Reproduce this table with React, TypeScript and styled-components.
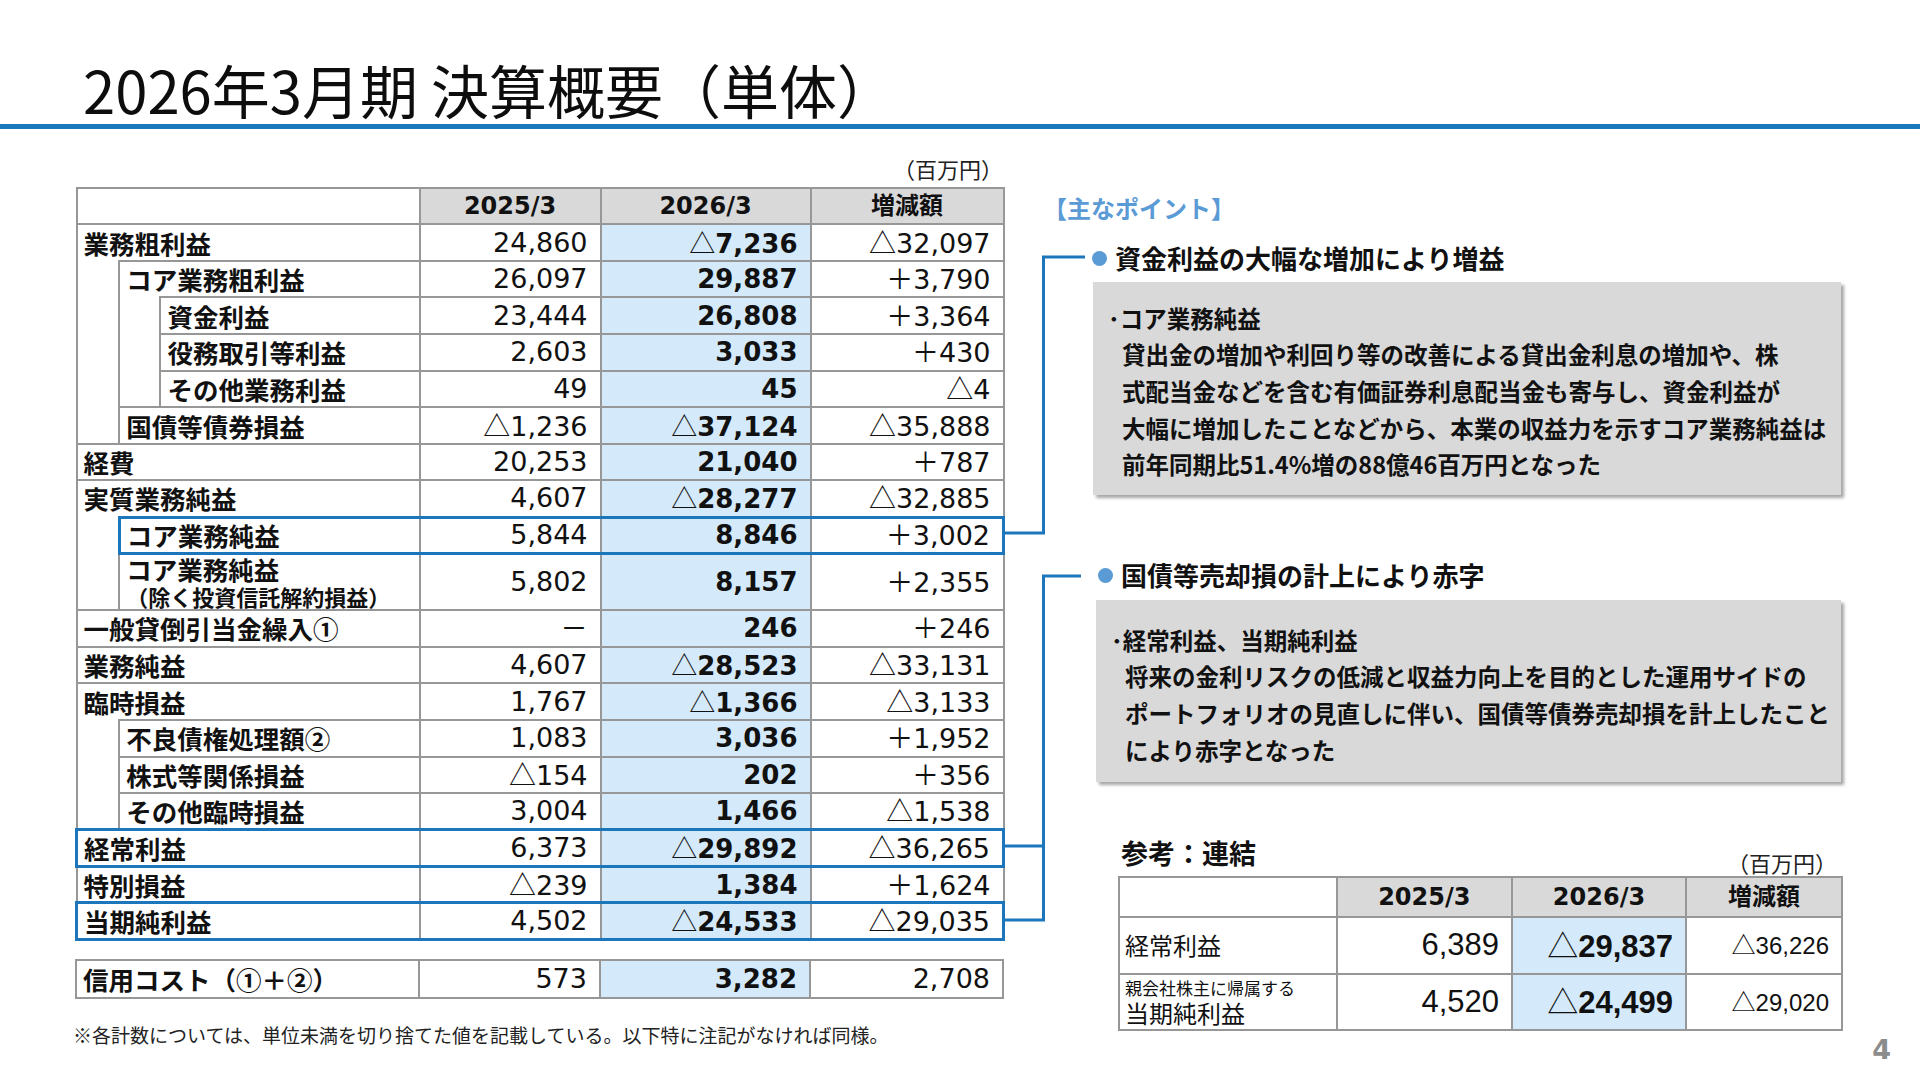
import React from "react";
import styled, { createGlobalStyle, css } from "styled-components";

const GlobalStyle = createGlobalStyle`
  html, body { margin: 0; padding: 0; background: #fff; }
  body { font-family: "Noto Sans CJK JP", "Noto Sans", sans-serif; color: #111; }
`;

const BLUE = "#1c76bc";
const GRID = "#979797";
const NUM_FONT = `"DejaVu Sans", "Noto Sans CJK JP", sans-serif`;

const Slide = styled.div`
  position: relative;
  width: 1920px;
  height: 1080px;
  overflow: hidden;
  background: #fff;
  display: flex;
  flex-direction: column;
`;

const Header = styled.header`
  flex: none;
  height: 124px;
  box-sizing: border-box;
  display: flex;
  align-items: flex-end;
  padding-left: 83px;
`;

const Title = styled.h1`
  margin: 0 0 2px;
  font-size: 58px;
  line-height: 66px;
  font-weight: 400;
  color: #0d0d0d;
  white-space: nowrap;
`;

const Rule = styled.div`
  flex: none;
  height: 5px;
  background: ${BLUE};
`;

const Body = styled.main`
  display: flex;
  flex: none;
`;

const LeftCol = styled.section`
  width: 928px;
  margin-left: 75px;
  display: flex;
  flex-direction: column;
`;

const UnitNote = styled.div<{ $top: number }>`
  margin-top: ${(p) => p.$top}px;
  font-size: 22px;
  line-height: 24px;
  color: #222;
  text-align: right;
  white-space: nowrap;
`;

const Table = styled.table<{ $top: number; $w: number }>`
  margin-top: ${(p) => p.$top}px;
  width: ${(p) => p.$w}px;
  border-collapse: collapse;
  table-layout: fixed;
`;

const Col = styled.col<{ $w: number }>`
  width: ${(p) => p.$w}px;
`;

const Tr = styled.tr<{ $h: number }>`
  height: ${(p) => p.$h}px;
`;

const HeadCell = styled.th<{ $blank?: boolean }>`
  border: 2px solid ${GRID};
  padding: 0;
  background: ${(p) => (p.$blank ? "#fff" : "#d9d9d9")};
  font-family: ${NUM_FONT};
  font-size: 24px;
  line-height: 28px;
  font-weight: 700;
  color: #111;
  text-align: center;
  white-space: nowrap;
`;

const Spacer = styled.td`
  border: 2px solid ${GRID};
  border-top: none;
  padding: 0;
  background: #fff;
`;

const hlBorder = css`
  border-top: 3px solid ${BLUE};
  border-bottom: 3px solid ${BLUE};
`;

const Label = styled.td<{ $open?: boolean; $hl?: boolean }>`
  border: 2px solid ${GRID};
  ${(p) => p.$open && "border-bottom: none;"}
  ${(p) => p.$hl && hlBorder}
  ${(p) => p.$hl && `border-left: 3px solid ${BLUE};`}
  padding: 0 0 0 6px;
  font-size: 25.5px;
  font-weight: 700;
  line-height: 28px;
  color: #111;
  text-align: left;
  white-space: nowrap;
  background: #fff;
`;

const SubLabel = styled.span`
  display: block;
  font-size: 22px;
  line-height: 26px;
`;

const Val = styled.td<{ $bold?: boolean; $hl?: boolean; $last?: boolean }>`
  border: 2px solid ${GRID};
  ${(p) => p.$hl && hlBorder}
  ${(p) => p.$hl && p.$last && `border-right: 3px solid ${BLUE};`}
  padding: 0 12px 0 0;
  background: ${(p) => (p.$bold ? "#d4eafa" : "#fff")};
  font-family: ${NUM_FONT};
  font-size: ${(p) => (p.$bold ? 26 : 27)}px;
  line-height: 28px;
  font-weight: ${(p) => (p.$bold ? 700 : 400)};
  color: #111;
  text-align: right;
  white-space: nowrap;
`;

const Sign = styled.span`
  font-family: "Noto Sans CJK JP", sans-serif;
  font-weight: 400;
`;

const Footnote = styled.p`
  margin: 22px 0 0 -2px;
  font-size: 19px;
  line-height: 28px;
  color: #222;
  white-space: nowrap;
`;

const RightCol = styled.section`
  flex: 1;
  margin-left: 40px;
  display: flex;
  flex-direction: column;
`;

const Points = styled.div`
  margin-top: 64px;
  font-size: 24px;
  line-height: 30px;
  font-weight: 700;
  color: #5b9bd5;
  white-space: nowrap;
`;

const Heading = styled.h2<{ $top: number; $pad: number }>`
  margin: ${(p) => p.$top}px 0 0;
  padding-left: ${(p) => p.$pad}px;
  display: flex;
  align-items: center;
  gap: 8px;
  font-size: 26px;
  line-height: 34px;
  font-weight: 700;
  color: #111;
  white-space: nowrap;
`;

const Dot = styled.span`
  width: 15px;
  height: 15px;
  border-radius: 50%;
  background: #5b9bd5;
  flex: none;
`;

const NoteBox = styled.div<{ $top: number; $left: number; $w: number; $h: number; $pt: number }>`
  margin: ${(p) => p.$top}px 0 0 ${(p) => p.$left}px;
  width: ${(p) => p.$w}px;
  height: ${(p) => p.$h}px;
  flex: none;
  box-sizing: border-box;
  padding: ${(p) => p.$pt}px 0 0 29px;
  background: #d9d9d9;
  box-shadow: 3px 3px 3px rgba(0, 0, 0, 0.35);
`;

const NoteText = styled.p`
  margin: 0;
  text-indent: -14px;
  font-size: 23.5px;
  line-height: 36.7px;
  font-weight: 700;
  color: #111;
  white-space: nowrap;
`;

const RefHead = styled.div`
  margin: 54px 0 0 78px;
  width: 716px;
  height: 40px;
  flex: none;
  display: flex;
  justify-content: space-between;
  align-items: flex-start;
`;

const RefTitle = styled.h3`
  margin: 0;
  font-size: 27px;
  line-height: 34px;
  font-weight: 700;
  color: #111;
  white-space: nowrap;
`;

const RefUnit = styled.span`
  margin-top: 14px;
  font-size: 22px;
  line-height: 24px;
  color: #222;
  white-space: nowrap;
`;

const RefTable = styled.table`
  margin-left: 75px;
  width: 723px;
  border-collapse: collapse;
  table-layout: fixed;
`;

const RefLabel = styled.td`
  border: 2px solid ${GRID};
  padding: 0 0 0 5px;
  font-size: 24px;
  line-height: 28px;
  font-weight: 400;
  color: #111;
  white-space: nowrap;
`;

const RefSmall = styled.span`
  display: block;
  font-size: 17px;
  line-height: 22px;
`;

const RefVal = styled.td<{ $bold?: boolean; $small?: boolean }>`
  border: 2px solid ${GRID};
  padding: 0 12px 0 0;
  background: ${(p) => (p.$bold ? "#d4eafa" : "#fff")};
  font-family: "Liberation Sans", "Noto Sans CJK JP", sans-serif;
  font-size: ${(p) => (p.$small ? 24 : 31)}px;
  line-height: 34px;
  font-weight: ${(p) => (p.$bold ? 700 : 400)};
  color: #111;
  text-align: right;
  white-space: nowrap;
`;

const PageNum = styled.div`
  margin-top: 4px;
  padding-right: 29px;
  text-align: right;
  font-family: "DejaVu Sans", sans-serif;
  font-size: 27px;
  line-height: 30px;
  font-weight: 700;
  color: #8c8c8c;
`;

const Connectors = styled.svg`
  position: absolute;
  left: 0;
  top: 0;
  pointer-events: none;
`;

type Row = {
  label: string;
  sub?: string;
  level: 0 | 1 | 2;
  a: string;
  b: string;
  c: string;
  sp1?: number;
  sp2?: number;
  open?: boolean;
  hl?: boolean;
  tall?: boolean;
};

const rows: Row[] = [
  { label: "業務粗利益", level: 0, open: true, a: "24,860", b: "△7,236", c: "△32,097" },
  { label: "コア業務粗利益", level: 1, sp1: 5, open: true, a: "26,097", b: "29,887", c: "＋3,790" },
  { label: "資金利益", level: 2, sp2: 3, a: "23,444", b: "26,808", c: "＋3,364" },
  { label: "役務取引等利益", level: 2, a: "2,603", b: "3,033", c: "＋430" },
  { label: "その他業務利益", level: 2, a: "49", b: "45", c: "△4" },
  { label: "国債等債券損益", level: 1, a: "△1,236", b: "△37,124", c: "△35,888" },
  { label: "経費", level: 0, a: "20,253", b: "21,040", c: "＋787" },
  { label: "実質業務純益", level: 0, open: true, a: "4,607", b: "△28,277", c: "△32,885" },
  { label: "コア業務純益", level: 1, sp1: 2, hl: true, a: "5,844", b: "8,846", c: "＋3,002" },
  { label: "コア業務純益", sub: "（除く投資信託解約損益）", level: 1, tall: true, a: "5,802", b: "8,157", c: "＋2,355" },
  { label: "一般貸倒引当金繰入①", level: 0, a: "－", b: "246", c: "＋246" },
  { label: "業務純益", level: 0, a: "4,607", b: "△28,523", c: "△33,131" },
  { label: "臨時損益", level: 0, open: true, a: "1,767", b: "△1,366", c: "△3,133" },
  { label: "不良債権処理額②", level: 1, sp1: 3, a: "1,083", b: "3,036", c: "＋1,952" },
  { label: "株式等関係損益", level: 1, a: "△154", b: "202", c: "＋356" },
  { label: "その他臨時損益", level: 1, a: "3,004", b: "1,466", c: "△1,538" },
  { label: "経常利益", level: 0, hl: true, a: "6,373", b: "△29,892", c: "△36,265" },
  { label: "特別損益", level: 0, a: "△239", b: "1,384", c: "＋1,624" },
  { label: "当期純利益", level: 0, hl: true, a: "4,502", b: "△24,533", c: "△29,035" },
];

const Num = ({ v }: { v: string }) => {
  const m = v.match(/^([△＋－])(.*)$/);
  if (!m) return <>{v}</>;
  return (
    <>
      <Sign>{m[1]}</Sign>
      {m[2]}
    </>
  );
};

const ROW_H = 36.6;

const MainCols = () => (
  <colgroup>
    <Col $w={42.7} />
    <Col $w={41.3} />
    <Col $w={259} />
    <Col $w={181} />
    <Col $w={210} />
    <Col $w={193} />
  </colgroup>
);

export default function App() {
  return (
    <>
      <GlobalStyle />
      <Slide>
        <Header>
          <Title>2026年3月期 決算概要（単体）</Title>
        </Header>
        <Rule />
        <Body>
          <LeftCol>
            <UnitNote $top={27}>（百万円）</UnitNote>
            <Table $top={6.7} $w={927}>
              <MainCols />
              <thead>
                <Tr $h={ROW_H}>
                  <HeadCell $blank colSpan={3} />
                  <HeadCell>2025/3</HeadCell>
                  <HeadCell>2026/3</HeadCell>
                  <HeadCell>増減額</HeadCell>
                </Tr>
              </thead>
              <tbody>
                {rows.map((r, i) => (
                  <Tr key={i} $h={r.tall ? 56 : ROW_H}>
                    {r.sp1 ? <Spacer rowSpan={r.sp1} /> : null}
                    {r.sp2 ? <Spacer rowSpan={r.sp2} /> : null}
                    <Label colSpan={3 - r.level} $open={r.open} $hl={r.hl}>
                      {r.label}
                      {r.sub ? <SubLabel>{r.sub}</SubLabel> : null}
                    </Label>
                    <Val $hl={r.hl}>
                      <Num v={r.a} />
                    </Val>
                    <Val $hl={r.hl} $bold>
                      <Num v={r.b} />
                    </Val>
                    <Val $hl={r.hl} $last>
                      <Num v={r.c} />
                    </Val>
                  </Tr>
                ))}
              </tbody>
            </Table>
            <Table $top={18} $w={927}>
              <MainCols />
              <tbody>
                <Tr $h={38.4}>
                  <Label colSpan={3}>信用コスト（①＋②）</Label>
                  <Val>573</Val>
                  <Val $bold>3,282</Val>
                  <Val>2,708</Val>
                </Tr>
              </tbody>
            </Table>
            <Footnote>
              ※各計数については、単位未満を切り捨てた値を記載している。以下特に注記がなければ同様。
            </Footnote>
          </LeftCol>

          <RightCol>
            <Points>【主なポイント】</Points>
            <Heading $top={18} $pad={49}>
              <Dot />
              資金利益の大幅な増加により増益
            </Heading>
            <NoteBox $top={7} $left={50} $w={748} $h={213} $pt={17.6}>
              <NoteText>
                ･コア業務純益
                <br />
                貸出金の増加や利回り等の改善による貸出金利息の増加や、株
                <br />
                式配当金などを含む有価証券利息配当金も寄与し、資金利益が
                <br />
                大幅に増加したことなどから、本業の収益力を示すコア業務純益は
                <br />
                前年同期比51.4%増の88億46百万円となった
              </NoteText>
            </NoteBox>
            <Heading $top={63} $pad={55}>
              <Dot />
              国債等売却損の計上により赤字
            </Heading>
            <NoteBox $top={8} $left={53} $w={745} $h={182} $pt={21.6}>
              <NoteText>
                ･経常利益、当期純利益
                <br />
                将来の金利リスクの低減と収益力向上を目的とした運用サイドの
                <br />
                ポートフォリオの見直しに伴い、国債等債券売却損を計上したこと
                <br />
                により赤字となった
              </NoteText>
            </NoteBox>
            <RefHead>
              <RefTitle>参考：連結</RefTitle>
              <RefUnit>（百万円）</RefUnit>
            </RefHead>
            <RefTable>
              <colgroup>
                <Col $w={217.6} />
                <Col $w={175.4} />
                <Col $w={174} />
                <Col $w={156} />
              </colgroup>
              <thead>
                <Tr $h={40}>
                  <HeadCell $blank />
                  <HeadCell>2025/3</HeadCell>
                  <HeadCell>2026/3</HeadCell>
                  <HeadCell>増減額</HeadCell>
                </Tr>
              </thead>
              <tbody>
                <Tr $h={56.7}>
                  <RefLabel>経常利益</RefLabel>
                  <RefVal>6,389</RefVal>
                  <RefVal $bold>
                    <Num v="△29,837" />
                  </RefVal>
                  <RefVal $small>
                    <Num v="△36,226" />
                  </RefVal>
                </Tr>
                <Tr $h={56.6}>
                  <RefLabel>
                    <RefSmall>親会社株主に帰属する</RefSmall>
                    当期純利益
                  </RefLabel>
                  <RefVal>4,520</RefVal>
                  <RefVal $bold>
                    <Num v="△24,499" />
                  </RefVal>
                  <RefVal $small>
                    <Num v="△29,020" />
                  </RefVal>
                </Tr>
              </tbody>
            </RefTable>
            <PageNum>4</PageNum>
          </RightCol>
        </Body>

        <Connectors width={1920} height={1080} viewBox="0 0 1920 1080">
          <path d="M1003 533 H1043.5 V257 H1085" fill="none" stroke={BLUE} strokeWidth={3} />
          <path d="M1003 846 H1043.5" fill="none" stroke={BLUE} strokeWidth={3} />
          <path d="M1003 920 H1043.5 V576 H1081" fill="none" stroke={BLUE} strokeWidth={3} />
        </Connectors>
      </Slide>
    </>
  );
}
